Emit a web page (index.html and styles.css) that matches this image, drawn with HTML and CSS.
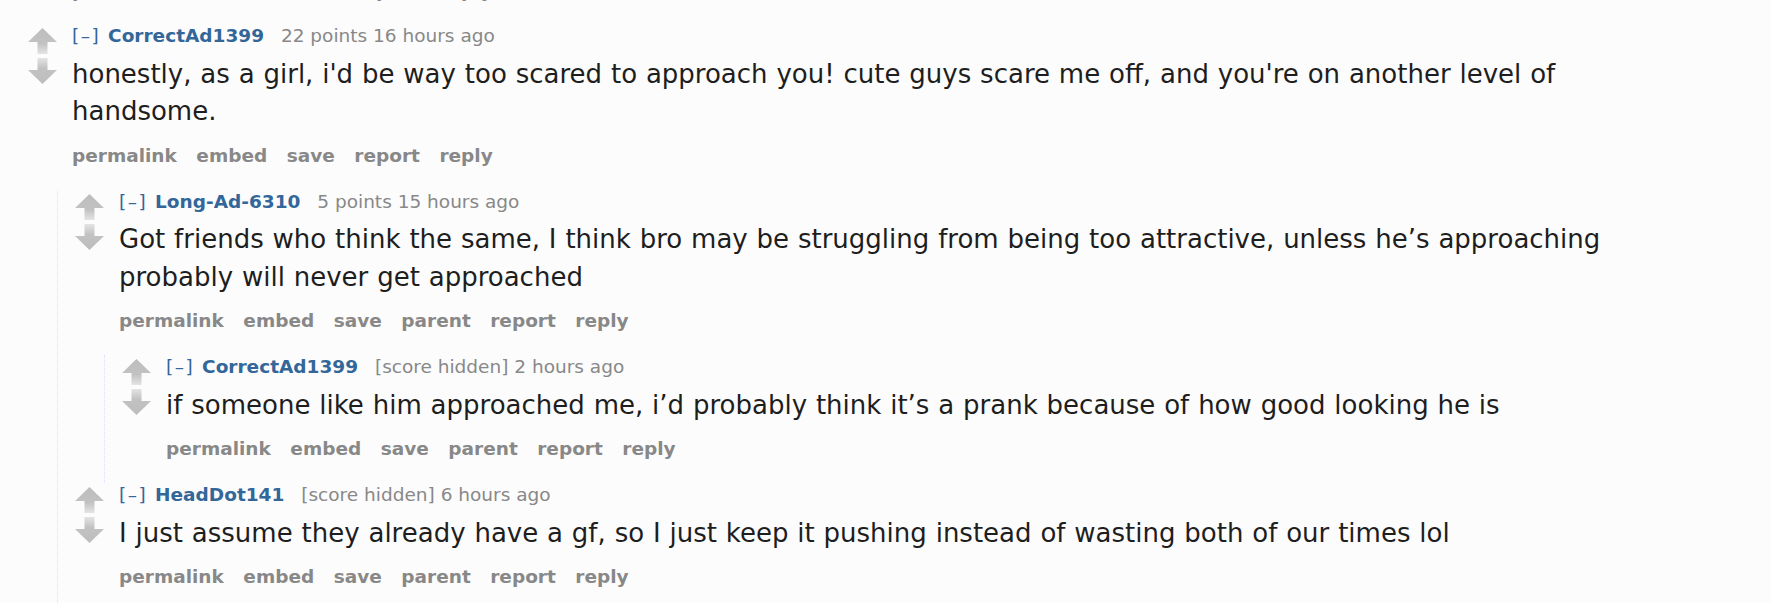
FILE: index.html
```html
<!DOCTYPE html>
<html lang="en">
<head>
<meta charset="utf-8">
<title>comments</title>
<link rel="stylesheet" href="styles.css">
</head>
<body>
<svg class="defs" width="0" height="0" aria-hidden="true">
  <defs>
    <linearGradient id="gUp" x1="0" y1="0" x2="0" y2="1">
      <stop offset="0" stop-color="#bdbdbd"/>
      <stop offset="0.6" stop-color="#c2c2c2"/>
      <stop offset="1" stop-color="#e4e4e4"/>
    </linearGradient>
    <linearGradient id="gDown" x1="0" y1="0" x2="0" y2="1">
      <stop offset="0" stop-color="#e4e4e4"/>
      <stop offset="0.4" stop-color="#c2c2c2"/>
      <stop offset="1" stop-color="#bdbdbd"/>
    </linearGradient>
  </defs>
</svg>

<div class="thread">
  <div class="prev-tail">
    <ul class="buttons">
      <li>permalink</li><li>embed</li><li>save</li><li>report</li><li>reply</li>
    </ul>
  </div>

  <div class="comment">
    <div class="entry-row">
      <div class="midcol">
        <svg class="arrow" viewBox="0 0 29 26"><polygon points="14.5,0 29,14 19.5,14 19.5,26 9.5,26 9.5,14 0,14" fill="url(#gUp)"/></svg>
        <svg class="arrow" viewBox="0 0 29 26"><polygon points="9.5,0 19.5,0 19.5,12 29,12 14.5,26 0,12 9.5,12" fill="url(#gDown)"/></svg>
      </div>
      <div class="entry">
        <p class="tagline"><span class="expand">[–]</span> <span class="author">CorrectAd1399</span> <span class="score">22 points</span> <span class="time">16 hours ago</span></p>
        <div class="md"><p>honestly, as a girl, i'd be way too scared to approach you! cute guys scare me off, and you're on another level of handsome.</p></div>
        <ul class="buttons">
          <li>permalink</li><li>embed</li><li>save</li><li>report</li><li>reply</li>
        </ul>
      </div>
    </div>

    <div class="child">
      <div class="comment">
        <div class="entry-row">
          <div class="midcol">
            <svg class="arrow" viewBox="0 0 29 26"><polygon points="14.5,0 29,14 19.5,14 19.5,26 9.5,26 9.5,14 0,14" fill="url(#gUp)"/></svg>
            <svg class="arrow" viewBox="0 0 29 26"><polygon points="9.5,0 19.5,0 19.5,12 29,12 14.5,26 0,12 9.5,12" fill="url(#gDown)"/></svg>
          </div>
          <div class="entry">
            <p class="tagline"><span class="expand">[–]</span> <span class="author">Long-Ad-6310</span> <span class="score">5 points</span> <span class="time">15 hours ago</span></p>
            <div class="md"><p>Got friends who think the same, I think bro may be struggling from being too attractive, unless he’s approaching probably will never get approached</p></div>
            <ul class="buttons">
              <li>permalink</li><li>embed</li><li>save</li><li>parent</li><li>report</li><li>reply</li>
            </ul>
          </div>
        </div>

        <div class="child">
          <div class="comment">
            <div class="entry-row">
              <div class="midcol">
                <svg class="arrow" viewBox="0 0 29 26"><polygon points="14.5,0 29,14 19.5,14 19.5,26 9.5,26 9.5,14 0,14" fill="url(#gUp)"/></svg>
                <svg class="arrow" viewBox="0 0 29 26"><polygon points="9.5,0 19.5,0 19.5,12 29,12 14.5,26 0,12 9.5,12" fill="url(#gDown)"/></svg>
              </div>
              <div class="entry">
                <p class="tagline"><span class="expand">[–]</span> <span class="author">CorrectAd1399</span> <span class="score">[score hidden]</span> <span class="time">2 hours ago</span></p>
                <div class="md"><p>if someone like him approached me, i’d probably think it’s a prank because of how good looking he is</p></div>
                <ul class="buttons">
                  <li>permalink</li><li>embed</li><li>save</li><li>parent</li><li>report</li><li>reply</li>
                </ul>
              </div>
            </div>
          </div>
        </div>
      </div>

      <div class="comment">
        <div class="entry-row">
          <div class="midcol">
            <svg class="arrow" viewBox="0 0 29 26"><polygon points="14.5,0 29,14 19.5,14 19.5,26 9.5,26 9.5,14 0,14" fill="url(#gUp)"/></svg>
            <svg class="arrow" viewBox="0 0 29 26"><polygon points="9.5,0 19.5,0 19.5,12 29,12 14.5,26 0,12 9.5,12" fill="url(#gDown)"/></svg>
          </div>
          <div class="entry">
            <p class="tagline"><span class="expand">[–]</span> <span class="author">HeadDot141</span> <span class="score">[score hidden]</span> <span class="time">6 hours ago</span></p>
            <div class="md"><p>I just assume they already have a gf, so I just keep it pushing instead of wasting both of our times lol</p></div>
            <ul class="buttons">
              <li>permalink</li><li>embed</li><li>save</li><li>parent</li><li>report</li><li>reply</li>
            </ul>
          </div>
        </div>
      </div>
    </div>
  </div>
</div>
</body>
</html>
```

FILE: styles.css
```css
html, body {
  margin: 0;
  padding: 0;
  background: #fcfcfc;
  overflow: hidden;
}

body {
  font-family: "DejaVu Sans", Verdana, sans-serif;
  color: #222;
}

.defs {
  display: block;
  width: 0;
  height: 0;
  overflow: hidden;
}

.thread {
  margin-top: -21px;
  padding-left: 28px;
}

.prev-tail {
  padding-left: 44px;
  padding-bottom: 21px;
}

.prev-tail .buttons {
  margin-top: 0;
}

.entry-row {
  display: flex;
}

.midcol {
  flex: none;
  width: 44px;
  padding-top: 4px;
  display: flex;
  flex-direction: column;
  gap: 4px;
}

.arrow {
  display: block;
  width: 29px;
  height: 26px;
}

.entry {
  flex: 1;
  min-width: 0;
  padding-bottom: 22px;
}

.tagline {
  margin: 0;
  font-size: 18.5px;
  line-height: 24px;
  color: #888;
  white-space: nowrap;
}

.expand {
  color: #369;
  letter-spacing: 1.5px;
  margin-right: 2px;
}

.author {
  color: #369;
  font-weight: bold;
  margin-right: 11px;
}

.md {
  margin-top: 7.5px;
  font-size: 26px;
  line-height: 37.5px;
  color: #1e1e1e;
  word-spacing: 0.6px;
  max-width: 60em;
}

.md p {
  margin: 0;
}

.buttons {
  margin: 13px 0 0;
  padding: 0;
  list-style: none;
  display: flex;
  gap: 19.5px;
  font-size: 18.5px;
  line-height: 24px;
  font-weight: bold;
  color: #888;
}

.child {
  margin-left: 29px;
  border-left: 1px dotted #ddf;
  padding-left: 17px;
}
```
